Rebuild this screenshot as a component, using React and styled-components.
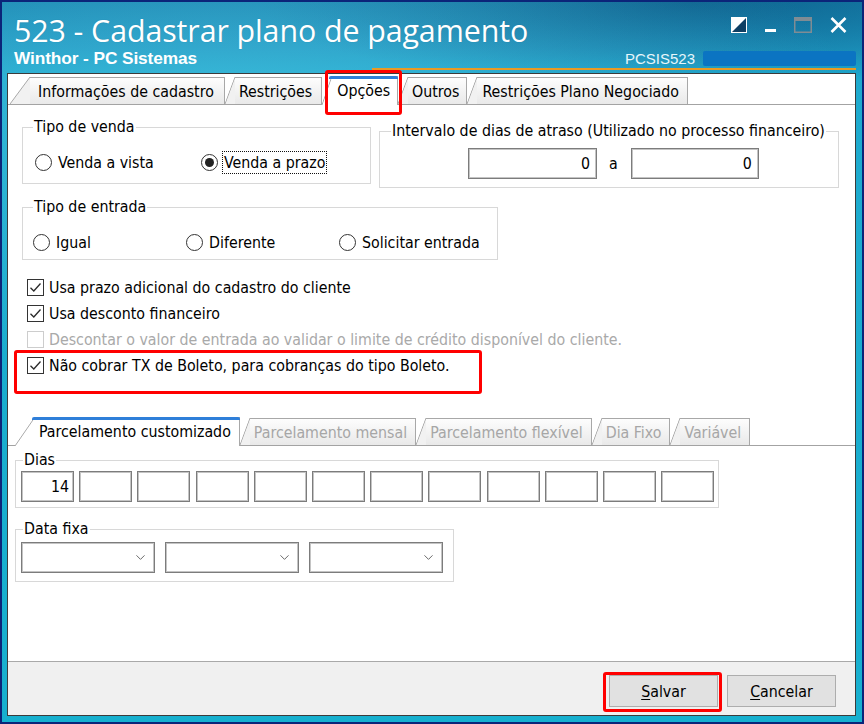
import React from 'react';
import styled, { createGlobalStyle, css } from 'styled-components';
import { ChevronDown } from 'lucide-react';

const UI_FONT = `"DejaVu Sans Condensed", "DejaVu Sans", sans-serif`;

const GlobalStyle = createGlobalStyle`
  html, body { margin: 0; padding: 0; background: #0b2479; }
  *, *::before, *::after { box-sizing: border-box; }
`;

const Window = styled.div`
  width: 864px;
  height: 724px;
  border: 2px solid #0b2479;
  padding: 0 6px 6px 5px;
  display: flex;
  flex-direction: column;
  overflow: hidden;
  font-family: ${UI_FONT};
  font-size: 15.8px;
  color: #000;
  background:
    radial-gradient(120% 60% at 28% 16%, rgba(110, 210, 235, 0.35), rgba(110, 210, 235, 0) 60%),
    radial-gradient(50% 12% at 80% 0%, rgba(6, 70, 115, 0.55), rgba(6, 70, 115, 0) 100%),
    linear-gradient(180deg, #1887b2 0px, #1e9ac3 45px, #1eaace 75px, #17b0cf 100%);
`;

/* ---------- title bar ---------- */

const Header = styled.header`
  display: flex;
  flex-direction: column;
  color: #fff;
`;

const TitleRow = styled.div`
  display: flex;
  align-items: flex-start;
  justify-content: space-between;
  padding: 14px 9px 0 7px;
  height: 47px;
`;

const Title = styled.h1`
  margin: 0;
  font-family: "Open Sans", "Liberation Sans", sans-serif;
  font-weight: 400;
  font-size: 30.4px;
  line-height: 30px;
  letter-spacing: -0.1px;
  text-shadow: 0 0 1px rgba(0, 40, 80, 0.25);
`;

const Controls = styled.div`
  display: flex;
  align-items: flex-start;
  gap: 18px;
  margin-top: 1px;
`;

const SubRow = styled.div`
  display: flex;
  align-items: center;
  height: 19px;
  padding-left: 7px;
`;

const AppName = styled.div`
  font-family: "Liberation Sans", Arial, sans-serif;
  font-weight: 700;
  font-size: 17.3px;
  letter-spacing: -0.1px;
`;

const ProgramCode = styled.div`
  margin-left: auto;
  font-family: "Liberation Sans", Arial, sans-serif;
  font-size: 15px;
  color: #e8f6fb;
`;

const StatusBar = styled.div`
  width: 153px;
  height: 15px;
  margin-left: 8px;
  border-radius: 2px;
  background: #0b74c2;
`;

const OrangeRule = styled.div`
  height: 2px;
  margin-left: 365px;
  background: #e99a24;
`;

/* ---------- client area ---------- */

const Content = styled.main`
  flex: 1;
  margin-top: 3px;
  display: flex;
  flex-direction: column;
  background: #fff;
  border: 1px solid #3b3b3b;
  position: relative;
`;

const TabStrip = styled.div`
  display: flex;
  align-items: flex-end;
  height: ${p => p.$h}px;
  padding-left: ${p => p.$pad}px;
  border-bottom: 1px solid #a3a3a3;
  margin-top: ${p => p.$mt || 0}px;
  flex-shrink: 0;
`;

const Tab = styled.div`
  position: relative;
  display: flex;
  align-items: center;
  height: 27px;
  margin-left: ${p => p.$slant}px;
  padding: 1px ${p => p.$padRight ?? 8}px 0 ${p => p.$padLeft}px;
  border-top: 1px solid #a8a8a8;
  border-right: 1px solid #a8a8a8;
  background: linear-gradient(#fdfdfd, #e9e9e9);
  color: ${p => (p.$disabled ? '#a6a6a6' : '#000')};
  white-space: nowrap;

  &::before {
    content: '';
    position: absolute;
    top: -1px;
    bottom: 0;
    left: -${p => p.$slant}px;
    width: ${p => p.$slant}px;
    background: linear-gradient(
      to top left,
      #f1f1f1 calc(50% - 0.8px),
      #a8a8a8 50%,
      transparent calc(50% + 0.8px)
    );
  }

  ${p =>
    p.$active &&
    css`
      height: 29px;
      margin-bottom: -1px;
      padding-bottom: 2px;
      background: #fff;
      z-index: 1;
      &::before {
        background: linear-gradient(
          to top left,
          #fff calc(50% - 0.8px),
          #a8a8a8 50%,
          transparent calc(50% + 0.8px)
        );
      }
      &::after {
        content: '';
        position: absolute;
        top: -1px;
        left: -3px;
        right: -1px;
        height: 3px;
        border-radius: 2px 2px 0 0;
        background: #2f7fd9;
      }
    `}
`;

const Highlight = styled.span`
  position: absolute;
  left: ${p => p.$x}px;
  top: ${p => p.$y}px;
  width: ${p => p.$w}px;
  height: ${p => p.$h}px;
  border: 3px solid #ff0000;
  border-radius: 3px;
  pointer-events: none;
  z-index: 5;
`;

const Page = styled.section`
  flex: 1;
  display: flex;
  flex-direction: column;
  padding: 13px 0 0 14px;
`;

const GroupRow = styled.div`
  display: flex;
  align-items: flex-start;
`;

const Group = styled.fieldset`
  margin: ${p => p.$mt || 0}px 0 0 ${p => p.$ml || 0}px;
  padding: 0;
  min-width: 0;
  width: ${p => p.$w}px;
  height: ${p => p.$h}px;
  border: 1px solid #d8d8d8;
  border-radius: 0;
  flex-shrink: 0;
`;

const Caption = styled.legend`
  margin-left: ${p => p.$ml ?? 10}px;
  padding: 0 1px;
  line-height: 18px;
`;

const OptionRow = styled.div`
  display: flex;
  align-items: center;
  height: 24px;
  margin-top: 14px;
  padding-left: ${p => p.$pad}px;
`;

const RadioItem = styled.label`
  display: flex;
  align-items: center;
  width: ${p => p.$w}px;
  flex-shrink: 0;
`;

const RadioCircle = styled.span`
  width: 17px;
  height: 17px;
  border-radius: 50%;
  border: 1px solid #333;
  background: #fff;
  display: flex;
  align-items: center;
  justify-content: center;
  flex-shrink: 0;
  &::after {
    content: '';
    width: 9px;
    height: 9px;
    border-radius: 50%;
    background: ${p => (p.$on ? '#222' : 'transparent')};
  }
`;

const OptionText = styled.span`
  margin-left: 4px;
  padding: 2px 1px 1px;
  line-height: 18px;
  border: 1px dotted ${p => (p.$focus ? '#111' : 'transparent')};
`;

const RangeRow = styled.div`
  display: flex;
  align-items: baseline;
  margin-top: 8px;
  padding-left: 88px;
`;

const NumField = styled.div`
  width: ${p => p.$w}px;
  height: 31px;
  padding: 0 6px;
  display: flex;
  align-items: center;
  justify-content: flex-end;
  border: 1px solid #7c7c7c;
  box-shadow: inset 0 0 0 1px #c4c4c4;
  background: #fff;
  flex-shrink: 0;
`;

const RangeSep = styled.span`
  margin: 0 13px 0 12px;
`;

const CheckList = styled.div`
  display: flex;
  flex-direction: column;
  margin: 14px 0 0 5px;
`;

const CheckRow = styled.label`
  position: relative;
  display: flex;
  align-items: center;
  height: 26px;
  color: ${p => (p.$disabled ? '#a9a9a9' : '#000')};
`;

const Box = styled.span`
  width: 17px;
  height: 17px;
  border: 1px solid ${p => (p.$disabled ? '#cdcdcd' : '#333')};
  background: #fff;
  display: flex;
  align-items: center;
  justify-content: center;
  flex-shrink: 0;
  margin-right: 5px;
`;

/* second tab control, flush with the client edges */
const SubPage = styled.div`
  display: flex;
  flex-direction: column;
  margin-left: -14px;
`;

const SubGroups = styled.div`
  display: flex;
  flex-direction: column;
  padding-left: 7px;
`;

const DayGrid = styled.div`
  display: grid;
  grid-template-columns: repeat(12, 53px);
  column-gap: 5.2px;
  margin: 2px 0 0 5px;
`;

const DayCell = styled(NumField)`
  width: 53px;
  padding: 0 4px;
`;

const ComboRow = styled.div`
  display: flex;
  gap: 10px;
  margin: 4px 0 0 5px;
`;

const Combo = styled.div`
  width: 134px;
  height: 31px;
  display: flex;
  align-items: center;
  justify-content: flex-end;
  padding-right: 6px;
  border: 1px solid #7c7c7c;
  box-shadow: inset 0 0 0 1px #c4c4c4;
  background: #fff;
  color: #555;
`;

const Footer = styled.footer`
  height: 54px;
  flex-shrink: 0;
  display: flex;
  justify-content: flex-end;
  align-items: flex-start;
  gap: 9px;
  padding: 13px 19px 0 0;
  border-top: 1px solid #a9a9a9;
  background: #f0f0f0;
`;

const Button = styled.button`
  position: relative;
  width: 109px;
  height: 32px;
  border: 1px solid #adadad;
  background: #e1e1e1;
  font: inherit;
  color: #000;
  padding: 0;
  u { text-decoration-thickness: 1px; text-underline-offset: 2px; }
`;

/* ---------- drawings ---------- */

const DockIcon = () => (
  <svg width="16" height="16" viewBox="0 0 16 16">
    <rect x="0.5" y="0.5" width="15" height="15" fill="#fff" />
    <polygon points="15,1 15,15 1,15" fill="#0e3f63" />
    <rect x="0.5" y="0.5" width="15" height="15" fill="none" stroke="#fff" />
  </svg>
);

const MinIcon = () => (
  <svg width="11" height="16" viewBox="0 0 11 16">
    <rect x="0" y="12" width="11" height="3" fill="#fff" />
  </svg>
);

const MaxIcon = () => (
  <svg width="18" height="16" viewBox="0 0 18 16">
    <rect x="0.75" y="0.75" width="16.5" height="14.5" fill="none" stroke="#7f8c94" strokeWidth="1.5" />
    <rect x="1" y="1" width="16" height="3" fill="#7f8c94" />
  </svg>
);

const CloseIcon = () => (
  <svg width="17" height="16" viewBox="0 0 17 16">
    <path d="M1.5 1 L15.5 15 M15.5 1 L1.5 15" stroke="#fff" strokeWidth="2.6" />
  </svg>
);

const Tick = () => (
  <svg width="13" height="13" viewBox="0 0 13 13">
    <path d="M1.5 6.8 L4.8 10 L11.5 2.5" fill="none" stroke="#2a2a2a" strokeWidth="1.3" />
  </svg>
);

/* ---------- data ---------- */

const mainTabs = [
  { label: 'Informações de cadastro', slant: 20, pad: 8, padRight: 10 },
  { label: 'Restrições', slant: 10, pad: 4, padRight: 9 },
  { label: 'Opções', slant: 10, pad: 5, padRight: 7, active: true, mark: true },
  { label: 'Outros', slant: 10, pad: 4, padRight: 7 },
  { label: 'Restrições Plano Negociado', slant: 10, pad: 5, padRight: 8 },
];

const installmentTabs = [
  { label: 'Parcelamento customizado', slant: 20, pad: 4, active: true },
  { label: 'Parcelamento mensal', slant: 10, pad: 4, disabled: true },
  { label: 'Parcelamento flexível', slant: 10, pad: 4, disabled: true },
  { label: 'Dia Fixo', slant: 10, pad: 4, disabled: true },
  { label: 'Variável', slant: 10, pad: 4, disabled: true },
];

const checks = [
  { label: 'Usa prazo adicional do cadastro do cliente', on: true },
  { label: 'Usa desconto financeiro', on: true },
  { label: 'Descontar o valor de entrada ao validar o limite de crédito disponível do cliente.', disabled: true },
  { label: 'Não cobrar TX de Boleto, para cobranças do tipo Boleto.', on: true, mark: true },
];

const days = ['14', '', '', '', '', '', '', '', '', '', '', ''];

export default function App() {
  return (
    <>
      <GlobalStyle />
      <Window>
        <Header>
          <TitleRow>
            <Title>523 - Cadastrar plano de pagamento</Title>
            <Controls>
              <DockIcon />
              <MinIcon />
              <MaxIcon />
              <CloseIcon />
            </Controls>
          </TitleRow>
          <SubRow>
            <AppName>Winthor - PC Sistemas</AppName>
            <ProgramCode>PCSIS523</ProgramCode>
            <StatusBar />
          </SubRow>
          <OrangeRule />
        </Header>

        <Content>
          <TabStrip $h={31} $pad={2}>
            {mainTabs.map(t => (
              <Tab
                key={t.label}
                $slant={t.slant}
                $padLeft={t.pad}
                $padRight={t.padRight}
                $active={t.active}
              >
                {t.label}
                {t.mark && <Highlight $x={-7} $y={-7} $w={77} $h={45} />}
              </Tab>
            ))}
          </TabStrip>

          <Page>
            <GroupRow>
              <Group $w={349} $h={66}>
                <Caption>Tipo de venda</Caption>
                <OptionRow $pad={12}>
                  <RadioItem $w={166}>
                    <RadioCircle />
                    <OptionText>Venda a vista</OptionText>
                  </RadioItem>
                  <RadioItem $w={140}>
                    <RadioCircle $on />
                    <OptionText $focus>Venda a prazo</OptionText>
                  </RadioItem>
                </OptionRow>
              </Group>
              <Group $w={460} $h={66} $mt={4} $ml={8}>
                <Caption $ml={11}>Intervalo de dias de atraso (Utilizado no processo financeiro)</Caption>
                <RangeRow>
                  <NumField $w={129}>0</NumField>
                  <RangeSep>a</RangeSep>
                  <NumField $w={128}>0</NumField>
                </RangeRow>
              </Group>
            </GroupRow>

            <Group $w={476} $h={62} $mt={10}>
              <Caption>Tipo de entrada</Caption>
              <OptionRow $pad={10}>
                <RadioItem $w={153}>
                  <RadioCircle />
                  <OptionText>Igual</OptionText>
                </RadioItem>
                <RadioItem $w={153}>
                  <RadioCircle />
                  <OptionText>Diferente</OptionText>
                </RadioItem>
                <RadioItem $w={150}>
                  <RadioCircle />
                  <OptionText>Solicitar entrada</OptionText>
                </RadioItem>
              </OptionRow>
            </Group>

            <CheckList>
              {checks.map(c => (
                <CheckRow key={c.label} $disabled={c.disabled}>
                  <Box $disabled={c.disabled}>{c.on && <Tick />}</Box>
                  {c.label}
                  {c.mark && <Highlight $x={-13} $y={-2} $w={468} $h={44} />}
                </CheckRow>
              ))}
            </CheckList>

            <SubPage>
              <TabStrip $h={34} $pad={7} $mt={34}>
                {installmentTabs.map(t => (
                  <Tab
                    key={t.label}
                    $slant={t.slant}
                    $padLeft={t.pad}
                    $active={t.active}
                    $disabled={t.disabled}
                  >
                    {t.label}
                  </Tab>
                ))}
              </TabStrip>

              <SubGroups>
                <Group $w={704} $h={57} $mt={5}>
                  <Caption $ml={7}>Dias</Caption>
                  <DayGrid>
                    {days.map((d, i) => (
                      <DayCell key={i}>{d}</DayCell>
                    ))}
                  </DayGrid>
                </Group>

                <Group $w={439} $h={62} $mt={12}>
                  <Caption $ml={7}>Data fixa</Caption>
                  <ComboRow>
                    {[0, 1, 2].map(i => (
                      <Combo key={i}>
                        <ChevronDown size={15} strokeWidth={1.4} />
                      </Combo>
                    ))}
                  </ComboRow>
                </Group>
              </SubGroups>
            </SubPage>
          </Page>

          <Footer>
            <Button>
              <u>S</u>alvar
              <Highlight $x={-7} $y={-4} $w={119} $h={40} />
            </Button>
            <Button>
              <u>C</u>ancelar
            </Button>
          </Footer>
        </Content>
      </Window>
    </>
  );
}
